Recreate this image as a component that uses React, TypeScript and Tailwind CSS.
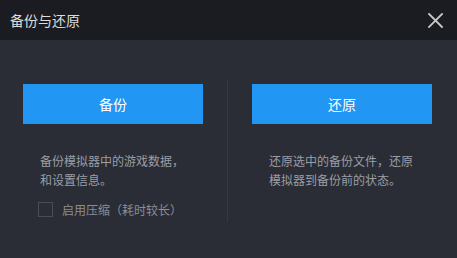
import React from "react";

export default function App() {
  const font = { fontFamily: '"Noto Sans CJK SC", "Noto Sans", sans-serif' };
  return (
    <div className="w-[457px] h-[258px] bg-[#2a2d35] flex flex-col overflow-hidden" style={font}>
      <div className="h-[40px] bg-[#1b1c21] flex items-center justify-between pl-[10px] pr-[14px] shrink-0">
        <span className="text-[14px] text-[#dcdcdc] leading-none">备份与还原</span>
        <svg width="15" height="15" viewBox="0 0 15 15" className="text-[#c8c8c8]">
          <path d="M1 1 L14 14 M14 1 L1 14" stroke="currentColor" strokeWidth="1.8" strokeLinecap="square" />
        </svg>
      </div>
      <div className="flex flex-1">
        <div className="w-[227px] pt-[44px] pl-[23px] flex flex-col">
          <button className="w-[180px] h-[40px] bg-[#2196f3] text-white text-[14px]">备份</button>
          <div className="pl-[17px] mt-[27px] text-[12px] leading-[19px] text-[#9b9ea6]">
            <div>备份模拟器中的游戏数据，</div>
            <div>和设置信息。</div>
          </div>
          <div className="pl-[15px] mt-[13px] flex items-center gap-[9px]">
            <div className="w-[15px] h-[15px] border border-[#4a4d55]"></div>
            <span className="text-[12px] text-[#8a8d95] leading-none">启用压缩（耗时较长）</span>
          </div>
        </div>
        <div className="w-px bg-[#363941] mt-[40px] mb-[36px]"></div>
        <div className="flex-1 pt-[44px] pl-[24px] flex flex-col">
          <button className="w-[180px] h-[40px] bg-[#2196f3] text-white text-[14px]">还原</button>
          <div className="pl-[17px] mt-[27px] text-[12px] leading-[19px] text-[#9b9ea6]">
            <div>还原选中的备份文件，还原</div>
            <div>模拟器到备份前的状态。</div>
          </div>
        </div>
      </div>
    </div>
  );
}
